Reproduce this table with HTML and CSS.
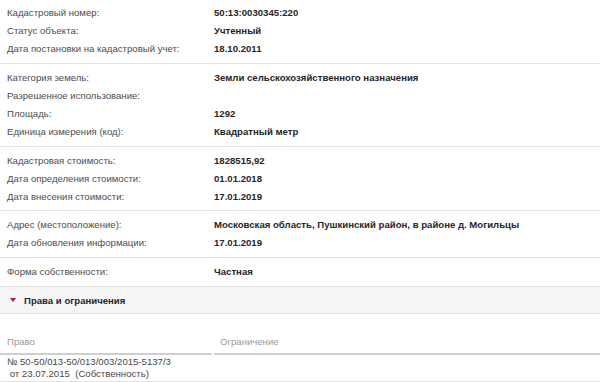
FILE: index.html
```html
<!DOCTYPE html>
<html lang="ru">
<head>
<meta charset="utf-8">
<link rel="stylesheet" href="styles.css">
</head>
<body>
<div class="page">
  <div class="group first">
    <div class="row"><span class="label">Кадастровый номер:</span><span class="value">50:13:0030345:220</span></div>
    <div class="row"><span class="label">Статус объекта:</span><span class="value">Учтенный</span></div>
    <div class="row"><span class="label">Дата постановки на кадастровый учет:</span><span class="value">18.10.2011</span></div>
  </div>
  <div class="group">
    <div class="row"><span class="label">Категория земель:</span><span class="value">Земли сельскохозяйственного назначения</span></div>
    <div class="row"><span class="label">Разрешенное использование:</span><span class="value"></span></div>
    <div class="row"><span class="label">Площадь:</span><span class="value">1292</span></div>
    <div class="row"><span class="label">Единица измерения (код):</span><span class="value">Квадратный метр</span></div>
  </div>
  <div class="group tight">
    <div class="row"><span class="label">Кадастровая стоимость:</span><span class="value">1828515,92</span></div>
    <div class="row"><span class="label">Дата определения стоимости:</span><span class="value">01.01.2018</span></div>
    <div class="row"><span class="label">Дата внесения стоимости:</span><span class="value">17.01.2019</span></div>
  </div>
  <div class="group">
    <div class="row"><span class="label">Адрес (местоположение):</span><span class="value">Московская область, Пушкинский район, в районе д. Могильцы</span></div>
    <div class="row"><span class="label">Дата обновления информации:</span><span class="value">17.01.2019</span></div>
  </div>
  <div class="group">
    <div class="row"><span class="label">Форма собственности:</span><span class="value">Частная</span></div>
  </div>
  <div class="section-head">
    <svg class="caret" width="6" height="4" viewBox="0 0 6 4"><polygon points="0,0 6,0 3,4" fill="#a0283a"/></svg>
    <span>Права и ограничения</span>
  </div>
  <div class="rights">
    <div class="thead">
      <div class="th th-right">Право</div>
      <div class="th th-limit">Ограничение</div>
    </div>
    <div class="trow">
      <div class="td">№ 50-50/013-50/013/003/2015-5137/3<br>&nbsp;от 23.07.2015&nbsp; (Собственность)</div>
      <div class="td"></div>
    </div>
  </div>
</div>
</body>
</html>
```
FILE: styles.css
```css
* { box-sizing: border-box; }
html, body { margin: 0; padding: 0; background: #fff; }
body {
  font-family: "Liberation Sans", Arial, sans-serif;
  font-size: 9.6px;
  color: #4a4a4a;
}
.page { width: 600px; }
.group {
  padding: 5px 0;
  border-bottom: 1px solid #e2e2e2;
}
.group.first { padding-top: 4px; }
.group.tight { padding-bottom: 4px; }
.row {
  display: grid;
  grid-template-columns: 207px 1fr;
  height: 18px;
  align-items: center;
  padding: 0 0 2px 7px;
}
.label { color: #4d4d4d; }
.value { font-weight: bold; color: #262626; }
.section-head {
  display: flex;
  align-items: center;
  height: 27px;
  background: #f5f5f5;
  border-bottom: 1px solid #e2e2e2;
  padding-left: 10px;
  font-weight: bold;
  color: #262626;
}
.caret { margin-right: 8px; }
.rights { margin-top: 17px; }
.thead {
  display: grid;
  grid-template-columns: 212px 1fr;
  column-gap: 2px;
}
.th {
  color: #9a9a9a;
  padding: 4px 0 4px 7px;
  line-height: 14px;
  border-bottom: 2px solid #cfcfcf;
}
.th-limit { padding-left: 6px; }
.trow {
  display: grid;
  grid-template-columns: 214px 1fr;
  border-bottom: 1px solid #e2e2e2;
}
.td {
  padding: 1px 0 1px 7px;
  line-height: 12px;
  color: #4a4a4a;
}
```
